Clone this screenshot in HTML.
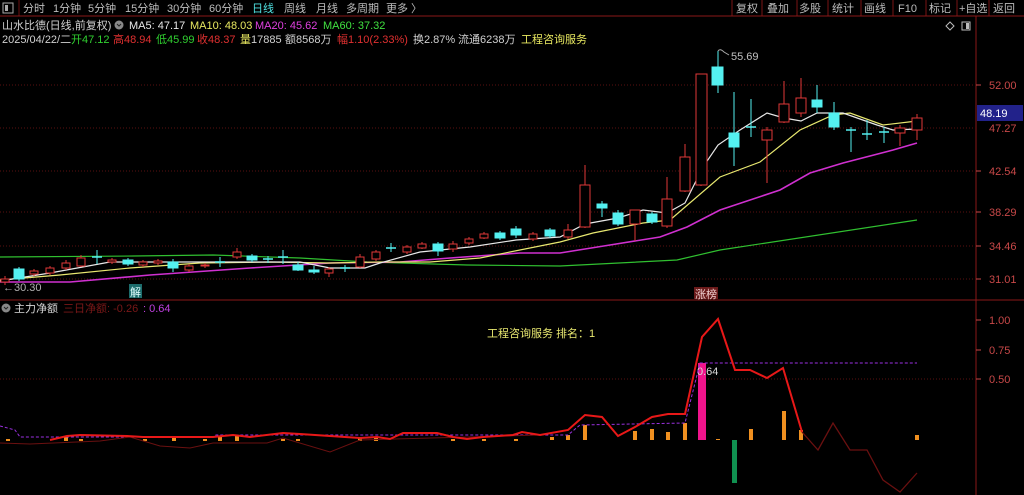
<!DOCTYPE html><html><head><meta charset="utf-8"><style>
html,body{margin:0;padding:0;background:#000;width:1024px;height:495px;overflow:hidden}
svg{display:block}
text{font-family:"Liberation Sans","Noto Sans CJK SC",sans-serif;font-size:11px}
</style></head><body>
<svg width="1024" height="495" viewBox="0 0 1024 495" xmlns="http://www.w3.org/2000/svg">
<rect width="1024" height="495" fill="#000"/>
<g fill="#bdbdbd" font-size="11.5">
<rect x="3" y="3" width="10" height="10" fill="none" stroke="#aaa"/><rect x="5" y="5" width="3" height="6" fill="#aaa"/>
<line x1="19" y1="0" x2="19" y2="16" stroke="#6a1010"/>
<text x="23" y="12">分时</text><text x="53" y="12">1分钟</text><text x="88" y="12">5分钟</text><text x="125" y="12">15分钟</text><text x="167" y="12">30分钟</text><text x="209" y="12">60分钟</text><text x="252" y="12" fill="#4fe0e0">日线</text><text x="284" y="12">周线</text><text x="316" y="12">月线</text><text x="346" y="12">多周期</text><text x="386" y="12">更多 〉</text>
<text x="736" y="12">复权</text><text x="767" y="12">叠加</text><text x="799" y="12">多股</text><text x="832" y="12">统计</text><text x="864" y="12">画线</text><text x="898" y="12">F10</text><text x="929" y="12">标记</text><text x="959" y="12">+自选</text><text x="993" y="12">返回</text>
</g>
<g stroke="#7a1414"><line x1="732" y1="0" x2="732" y2="16"/><line x1="762" y1="0" x2="762" y2="16"/><line x1="797" y1="0" x2="797" y2="16"/><line x1="828" y1="0" x2="828" y2="16"/><line x1="861" y1="0" x2="861" y2="16"/><line x1="893" y1="0" x2="893" y2="16"/><line x1="926" y1="0" x2="926" y2="16"/><line x1="957" y1="0" x2="957" y2="16"/><line x1="989" y1="0" x2="989" y2="16"/>
<line x1="0" y1="16" x2="1024" y2="16" stroke="#8a1818"/>
<line x1="976" y1="16" x2="976" y2="495" stroke="#8a1818"/>
<line x1="0" y1="300" x2="1024" y2="300" stroke="#8a1818"/></g>
<path d="M950 22 L954 26 L950 30 L946 26 Z" fill="none" stroke="#bbb"/><rect x="962" y="22" width="8" height="8" fill="none" stroke="#bbb"/><rect x="966" y="23" width="3" height="6" fill="#bbb"/>
<text x="2" y="29" fill="#d0d0d0">山水比德(日线,前复权)</text>
<circle cx="119" cy="25" r="4.5" fill="#888"/><path d="M117 24 L119 26 L121 24" stroke="#222" fill="none"/>
<g font-size="10.5"><text x="129" y="29" fill="#e8e8e8">MA5: 47.17</text><text x="190" y="29" fill="#e8e860">MA10: 48.03</text><text x="255" y="29" fill="#e040e0">MA20: 45.62</text><text x="323" y="29" fill="#40e040">MA60: 37.32</text></g>
<text x="2" y="43" fill="#d0d0d0">2025/04/22/二</text><text x="71" y="43" fill="#30d030">开47.12</text><text x="113" y="43" fill="#e03030">高48.94</text><text x="156" y="43" fill="#30d030">低45.99</text><text x="197" y="43" fill="#e03030">收48.37</text><text x="240" y="43" fill="#e8e860">量<tspan fill="#d0d0d0">17885</tspan></text><text x="285" y="43" fill="#d0d0d0">额8568万</text><text x="337" y="43" fill="#e03030">幅1.10(2.33%)</text><text x="413" y="43" fill="#d0d0d0">换2.87%</text><text x="458" y="43" fill="#d0d0d0">流通6238万</text><text x="521" y="43" fill="#e8e860">工程咨询服务</text>
<g stroke="#5a1010" stroke-dasharray="1,2"><line x1="0" y1="85" x2="975" y2="85"/><line x1="0" y1="128" x2="975" y2="128"/><line x1="0" y1="171" x2="975" y2="171"/><line x1="0" y1="212" x2="975" y2="212"/><line x1="0" y1="246" x2="975" y2="246"/><line x1="0" y1="279" x2="975" y2="279"/><line x1="0" y1="379" x2="975" y2="379"/></g>
<g fill="#c84848" font-size="11"><text x="989" y="89">52.00</text><text x="989" y="132">47.27</text><text x="989" y="175">42.54</text><text x="989" y="216">38.29</text><text x="989" y="250">34.46</text><text x="989" y="283">31.01</text><text x="989" y="324">1.00</text><text x="989" y="354">0.75</text><text x="989" y="383">0.50</text></g>
<g stroke="#c84848"><line x1="976" y1="85" x2="981" y2="85"/><line x1="976" y1="171" x2="981" y2="171"/><line x1="976" y1="212" x2="981" y2="212"/><line x1="976" y1="246" x2="981" y2="246"/><line x1="976" y1="279" x2="981" y2="279"/><line x1="976" y1="320" x2="981" y2="320"/><line x1="976" y1="350" x2="981" y2="350"/><line x1="976" y1="379" x2="981" y2="379"/></g>
<rect x="977" y="105" width="46" height="16" fill="#22228a"/><text x="980" y="117" fill="#fff">48.19</text>
<g fill="none" stroke-width="1.2">
<polyline stroke="#30c030" points="0,257 133,256 213,255 300,258 367,262 467,265 560,266 677,260 720,250 917,220"/>
<polyline stroke="#d030d0" stroke-width="1.6" points="0,282 70,282 150,275 250,268 330,263 400,262 450,258 520,253 560,253 610,245 660,237 687,227 720,210 780,190 810,173 843,163 893,150 917,143"/>
<polyline stroke="#e8e870" points="0,280 60,275 130,268 200,263 270,262 330,263 380,262 430,262 480,258 560,242 593,233 643,223 670,220 720,177 760,162 800,130 833,115 850,113 883,125 917,121"/>
<polyline stroke="#e8e8e8" points="0,281 50,273 110,262 170,262 230,262 300,262 330,268 365,268 380,263 420,252 470,247 516,240 560,237 585,224 618,218 643,210 667,213 685,203 703,167 718,145 740,130 767,113 784,118 801,121 817,113 843,113 877,125 893,130 917,129"/>
</g>
<g stroke="#e03838" fill="none">
<path d="M5 276V285M34 269V276M50 266V275M66 260V270M81 255V267M112 258V264M143 260V267M158 259V265M189 264V272M205 263V268M237 248V259M329 267V277M360 254V268M376 250V261M407 245V254M422 242V249M453 241V252M469 237V245M484 232V239M533 232V241M568 224V239M585 165V228M635 210V241M667 177V228M685 144V192M701 74V186M767 127V183M784 81V123M801 78V117M900 125V146M917 114V140"/>
<g fill="#000"><rect x="1" y="279" width="8" height="3"/><rect x="30" y="271" width="8" height="3"/><rect x="46" y="268" width="8" height="5"/><rect x="62" y="263" width="8" height="5"/><rect x="77" y="258" width="8" height="8"/><rect x="108" y="260" width="8" height="2"/><rect x="139" y="262" width="8" height="3"/><rect x="154" y="261" width="8" height="2"/><rect x="185" y="266" width="8" height="4"/><rect x="201" y="265" width="8" height="1"/><rect x="233" y="252" width="8" height="5"/><rect x="325" y="269" width="8" height="4"/><rect x="356" y="257" width="8" height="10"/><rect x="372" y="252" width="8" height="7"/><rect x="403" y="247" width="8" height="5"/><rect x="418" y="244" width="8" height="4"/><rect x="449" y="244" width="8" height="5"/><rect x="465" y="239" width="8" height="4"/><rect x="480" y="234" width="8" height="4"/><rect x="529" y="234" width="8" height="5"/><rect x="564" y="230" width="8" height="7"/><rect x="580" y="185" width="10" height="42"/><rect x="630" y="210" width="10" height="14"/><rect x="662" y="199" width="10" height="27"/><rect x="680" y="157" width="10" height="34"/><rect x="696" y="74" width="11" height="111"/><rect x="762" y="130" width="10" height="10"/><rect x="779" y="104" width="10" height="18"/><rect x="796" y="98" width="10" height="15"/><rect x="895" y="128" width="10" height="5"/><rect x="912" y="118" width="10" height="12"/></g>
</g>
<g stroke="#54f0f0" fill="#54f0f0">
<path d="M19 267V281M97 250V264M128 258V266M173 259V272M220 257V267M252 254V262M268 256V263M283 250V264M298 262V271M314 266V274M345 265V272M391 243V252M438 242V256M500 231V240M516 226V238M550 228V238M602 201V217M618 210V226M652 212V224M718 51V93M734 92V166M751 99V137M817 85V113M834 102V130M851 127V152M867 120V140M884 127V143"/>
<path d="M92 257H102M215 262H225M263 259H273M278 257H288M340 268H350M386 248H396M746 127H756M846 130H856M862 134H872M879 132H889" stroke-width="1.5"/>
<rect x="14" y="269" width="10" height="10"/><rect x="123" y="260" width="10" height="4"/><rect x="168" y="262" width="10" height="6"/><rect x="247" y="256" width="10" height="4"/><rect x="293" y="265" width="10" height="5"/><rect x="309" y="270" width="10" height="2"/><rect x="433" y="244" width="10" height="7"/><rect x="495" y="233" width="10" height="5"/><rect x="511" y="229" width="10" height="6"/><rect x="545" y="230" width="10" height="6"/><rect x="597" y="204" width="10" height="4"/><rect x="613" y="213" width="10" height="11"/><rect x="647" y="214" width="10" height="8"/><rect x="712" y="67" width="11" height="18"/><rect x="729" y="133" width="10" height="14"/><rect x="812" y="100" width="10" height="7"/><rect x="829" y="113" width="10" height="14"/></g>
<path d="M718 51 Q720 48 724 52 L729 55" stroke="#aaa" fill="none"/><text x="731" y="60" fill="#c0c0c0">55.69</text>
<text x="3" y="291" fill="#b0b0b0">←30.30</text>
<rect x="129" y="284" width="13" height="14" fill="#1c6c6c"/><text x="130" y="296" fill="#e0ffff">解</text>
<rect x="694" y="287" width="24" height="12" fill="#6a1a1a"/><text x="695" y="298" fill="#f0d0d0">涨榜</text>
<circle cx="6" cy="308" r="4.5" fill="#888"/><path d="M4 307 L6 309 L8 307" stroke="#222" fill="none"/>
<text x="14" y="312" fill="#d8d8d8">主力净额</text><text x="63" y="312" fill="#7a1818">三日净额: -0.26</text><text x="143" y="312" fill="#c040e0">: 0.64</text>
<text x="487" y="337" fill="#e8e870">工程咨询服务 排名：1</text>
<g fill="#f09020">
<rect x="6" y="439" width="4" height="2"/><rect x="64" y="437" width="4" height="4"/><rect x="79" y="439" width="4" height="2"/><rect x="143" y="439" width="4" height="2"/><rect x="172" y="437" width="4" height="4"/><rect x="203" y="439" width="4" height="2"/><rect x="218" y="436" width="4" height="5"/><rect x="235" y="436" width="4" height="5"/><rect x="281" y="439" width="4" height="2"/><rect x="296" y="439" width="4" height="2"/><rect x="358" y="437" width="4" height="4"/><rect x="374" y="438" width="4" height="3"/><rect x="451" y="439" width="4" height="2"/><rect x="482" y="439" width="4" height="2"/><rect x="514" y="439" width="4" height="2"/>
<rect x="550" y="437" width="4" height="3"/><rect x="566" y="435" width="4" height="5"/><rect x="583" y="425" width="4" height="15"/><rect x="633" y="431" width="4" height="9"/><rect x="650" y="429" width="4" height="11"/><rect x="666" y="432" width="4" height="8"/><rect x="683" y="423" width="4" height="17"/><rect x="716" y="439" width="4" height="1"/><rect x="749" y="429" width="4" height="11"/><rect x="782" y="411" width="4" height="29"/><rect x="799" y="430" width="4" height="10"/><rect x="915" y="435" width="4" height="5"/></g>
<rect x="698" y="363" width="8" height="77" fill="#f0148c"/>
<rect x="732" y="440" width="5" height="43" fill="#109050"/>
<text x="697" y="375" fill="#d8d8d8">0.64</text>
<polyline fill="none" stroke="#9a30e0" stroke-dasharray="3,2" points="0,426 15,430 20,437 213,437 216,435 568,435 580,425 685,423 700,363 917,363"/>
<polyline fill="none" stroke="#6a1010" points="0,443 30,444 100,441 130,437 160,446 190,448 213,443 267,443 283,438 330,452 360,440 540,435"/>
<polyline fill="none" stroke="#6a1010" stroke-width="1.3" points="802,432 818,450 833,423 850,450 867,450 883,480 900,492 917,473"/>
<polyline fill="none" stroke="#e81818" stroke-width="2" points="50,440 67,436 80,435 127,436 143,437 213,437 233,435 250,437 283,433 300,434 360,438 377,437 390,439 403,433 437,433 453,437 467,439 483,437 513,435 522,432 540,435 568,430 585,415 602,417 618,436 635,427 652,417 668,414 685,414 702,337 718,319 735,370 750,370 767,378 783,368 802,432"/>
</svg>
</body></html>
